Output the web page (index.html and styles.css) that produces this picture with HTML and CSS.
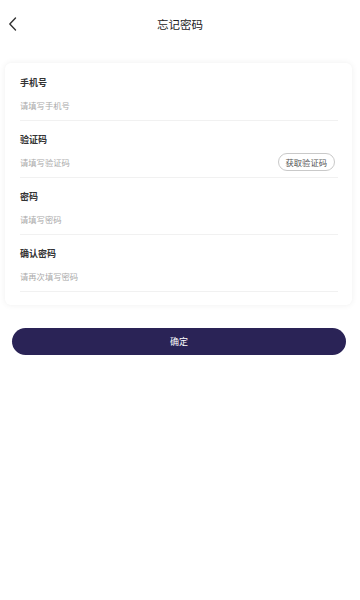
FILE: index.html
```html
<!DOCTYPE html>
<html lang="zh">
<head>
<meta charset="utf-8">
<meta name="viewport" content="width=device-width, initial-scale=1">
<title>忘记密码</title>
<link rel="stylesheet" href="styles.css">
</head>
<body>
<header class="nav">
  <span class="back">
    <svg width="10" height="16" viewBox="0 0 10 16"><path d="M7.5 2 L1.8 8 L7.5 14" fill="none" stroke="#333" stroke-width="1.4" stroke-linecap="round" stroke-linejoin="round"/></svg>
  </span>
  <h1 class="title">忘记密码</h1>
</header>
<main>
  <section class="card">
    <div class="row">
      <div class="label">手机号</div>
      <div class="field"><span class="ph">请填写手机号</span></div>
    </div>
    <div class="row">
      <div class="label">验证码</div>
      <div class="field"><span class="ph">请填写验证码</span><span class="code-btn">获取验证码</span></div>
    </div>
    <div class="row">
      <div class="label">密码</div>
      <div class="field"><span class="ph">请填写密码</span></div>
    </div>
    <div class="row">
      <div class="label">确认密码</div>
      <div class="field"><span class="ph">请再次填写密码</span></div>
    </div>
  </section>
  <button class="submit">确定</button>
</main>
</body>
</html>
```
FILE: styles.css
```css
* { box-sizing: border-box; }
html, body { margin: 0; padding: 0; background: #fff; }
body {
  font-family: "Noto Sans CJK SC", "Noto Sans", sans-serif;
  color: #333;
}
.nav {
  height: 48px;
  display: flex;
  align-items: center;
  justify-content: center;
  position: relative;
}
.back {
  position: absolute;
  left: 8px;
  top: 16px;
  width: 10px;
  height: 16px;
  display: flex;
}
.title {
  margin: 0;
  font-size: 11.5px;
  font-weight: 400;
  color: #222;
  letter-spacing: 0;
}
.card {
  margin: 15px 8px 0 5px;
  background: #fff;
  border-radius: 6px;
  box-shadow: 0 0 6px rgba(0,0,0,0.07);
  padding: 1px 14px 13px 15px;
}
.row {
  padding-top: 12px;
  padding-bottom: 8px;
  border-bottom: 1px solid #f1f1f1;
}
.label {
  font-size: 9px;
  line-height: 14px;
  font-weight: 700;
  color: #333;
}
.field {
  margin-top: 8px;
  height: 14px;
  display: flex;
  align-items: center;
  justify-content: space-between;
}
.ph {
  font-size: 8.3px;
  line-height: 14px;
  color: #aaa;
}
.code-btn {
  margin-right: 3px;
  height: 18px;
  padding: 0 7px;
  border: 1px solid #c9c9c9;
  border-radius: 9px;
  font-size: 8.3px;
  line-height: 16px;
  color: #555;
}
.submit {
  display: block;
  margin: 23px 14px 0 12px;
  width: calc(100% - 26px);
  height: 27px;
  border: none;
  border-radius: 14px;
  background: #2a2356;
  color: #fff;
  font-family: inherit;
  font-size: 9px;
  padding: 0;
}
```
